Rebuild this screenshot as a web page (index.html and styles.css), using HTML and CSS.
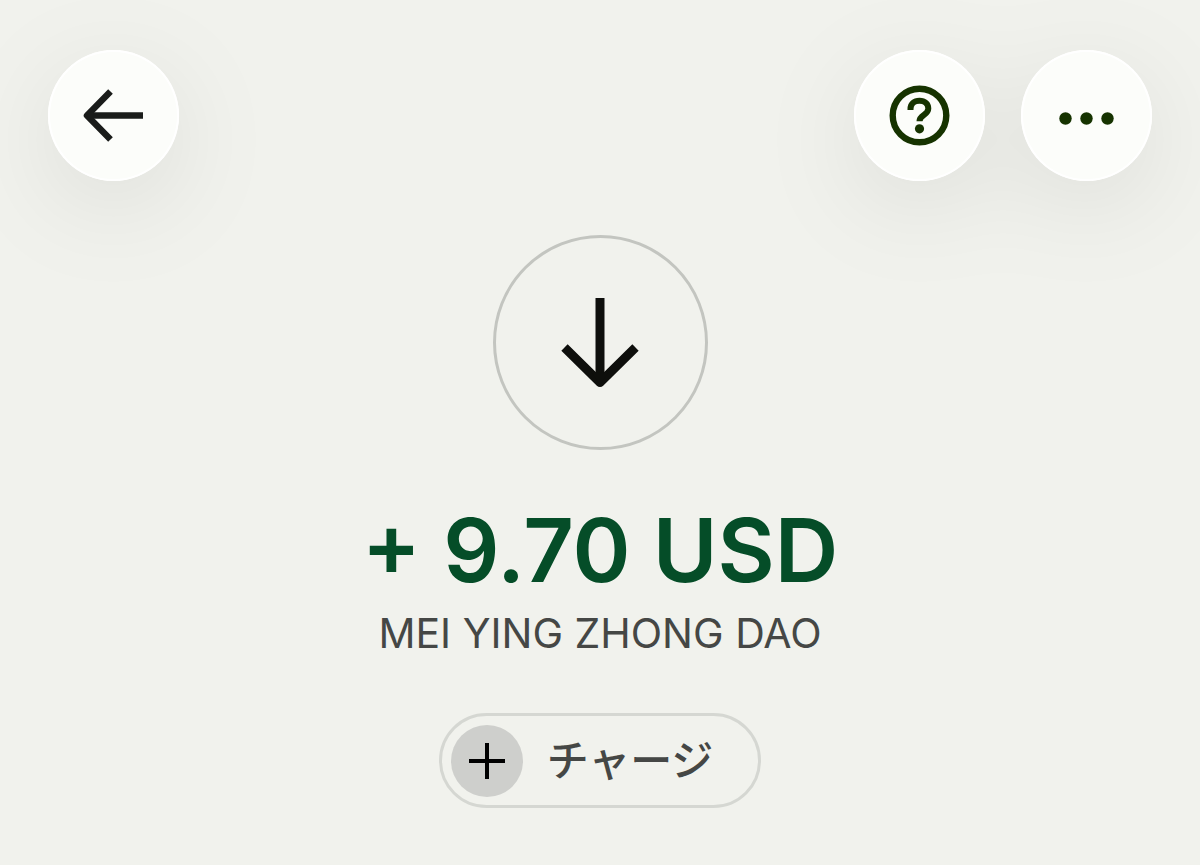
FILE: index.html
```html
<!DOCTYPE html>
<html lang="ja">
<head>
    <meta charset="utf-8">
    <meta name="viewport" content="width=device-width, initial-scale=1">
    <title>+ 9.70 USD</title>
    <link rel="stylesheet" href="styles.css">
</head>
<body>
    <header class="topbar">
        <div class="topbar-group">
            <button class="round-button" type="button" aria-label="戻る">
                <svg width="131" height="131" viewBox="0 0 131 131" fill="none" stroke="#1a1c1a" stroke-width="6.500">
                    <path d="M95 65.500H41"/>
                    <path d="M62.500 41.500L39 65.500L62.500 89.500" stroke-linejoin="round"/>
                    <path d="M38 65.500L46 59V72Z" fill="#1a1c1a" stroke="none"/>
                </svg>
            </button>
        </div>
        <div class="topbar-group">
            <button class="round-button" type="button" aria-label="ヘルプ">
                <svg width="131" height="131" viewBox="0 0 131 131" fill="none" stroke="#163300">
                    <circle cx="65.500" cy="65.500" r="26.800" stroke-width="6.400"/>
                    <path d="M56.500 60V59C56.500 54 60 50.800 65.500 50.800C71 50.800 74.300 54 74.300 58.500C74.300 65.500 65.500 64.500 65.500 71.300" stroke-width="6"/>
                    <circle cx="65.500" cy="78.800" r="4.600" fill="#163300" stroke="none"/>
                </svg>
            </button>
            <button class="round-button" type="button" aria-label="その他">
                <svg width="131" height="131" viewBox="0 0 131 131" fill="#163300">
                    <circle cx="44.500" cy="68.500" r="6.200"/>
                    <circle cx="65.500" cy="68.500" r="6.200"/>
                    <circle cx="86.500" cy="68.500" r="6.200"/>
                </svg>
            </button>
        </div>
    </header>

    <main class="transaction">
        <div class="direction">
            <svg width="90" height="96" viewBox="0 0 90 96" fill="none" stroke="#0e0f0c" stroke-width="9">
                <path d="M45 3V86"/>
                <path d="M9.500 52.500L45 87.500L80.500 52.500" stroke-linejoin="round"/>
                <path d="M45 90L37 78H53Z" fill="#0e0f0c" stroke="none"/>
            </svg>
        </div>
        <h1 class="amount">+ 9.70 USD</h1>
        <p class="sender">MEI YING ZHONG DAO</p>
        <button class="topup" type="button">
            <span class="topup-icon">
                <svg width="36" height="36" viewBox="0 0 36 36" stroke="#000" stroke-width="4">
                    <path d="M0 18H36M18 0V36"/>
                </svg>
            </span>
            <span>チャージ</span>
        </button>
    </main>
</body>
</html>
```

FILE: styles.css
```css
* {
    box-sizing: border-box;
}
body {
    margin: 0;
    background-color: #f1f2ed;
    font-family: Inter, "Noto Sans CJK JP", sans-serif;
    overflow-x: hidden;
}
button {
    padding: 0;
    font-family: inherit;
    cursor: pointer;
}
svg {
    display: block;
}
.topbar {
    display: flex;
    justify-content: space-between;
    padding: 50px 48px 0;
}
/* one shadow per group, so neighbours don't shade each other */
.topbar-group {
    display: flex;
    gap: 36px;
    filter: drop-shadow(0 24px 48px rgba(0, 0, 0, 0.08));
}
.round-button {
    width: 131px;
    height: 131px;
    border: none;
    border-radius: 50%;
    background-color: #fcfdfa;
    box-shadow: inset 0 0 0 2px #fff;
}
.transaction {
    display: flex;
    flex-direction: column;
    align-items: center;
    padding: 54px 48px;
}
.direction {
    display: flex;
    align-items: center;
    justify-content: center;
    width: 215px;
    height: 215px;
    border: 3px solid #c3c5c0;
    border-radius: 50%;
}
.amount {
    margin: 50px 0 0;
    color: #054d28;
    font-size: 88px;
    font-weight: 600;
    line-height: 100px;
}
.sender {
    margin: 8px 0 0;
    color: #454745;
    font-size: 41px;
    line-height: 50px;
}
.topup {
    display: flex;
    align-items: center;
    gap: 24px;
    height: 95px;
    margin-top: 55px;
    padding: 0 45px 0 9px;
    border: 3px solid #d5d7d2;
    border-radius: 48px;
    background: none;
    color: #454745;
    font-size: 42px;
    font-weight: 500;
    line-height: 50px;
}
.topup-icon {
    display: flex;
    align-items: center;
    justify-content: center;
    width: 72px;
    height: 72px;
    border-radius: 50%;
    background-color: #cecfcc;
}
```
